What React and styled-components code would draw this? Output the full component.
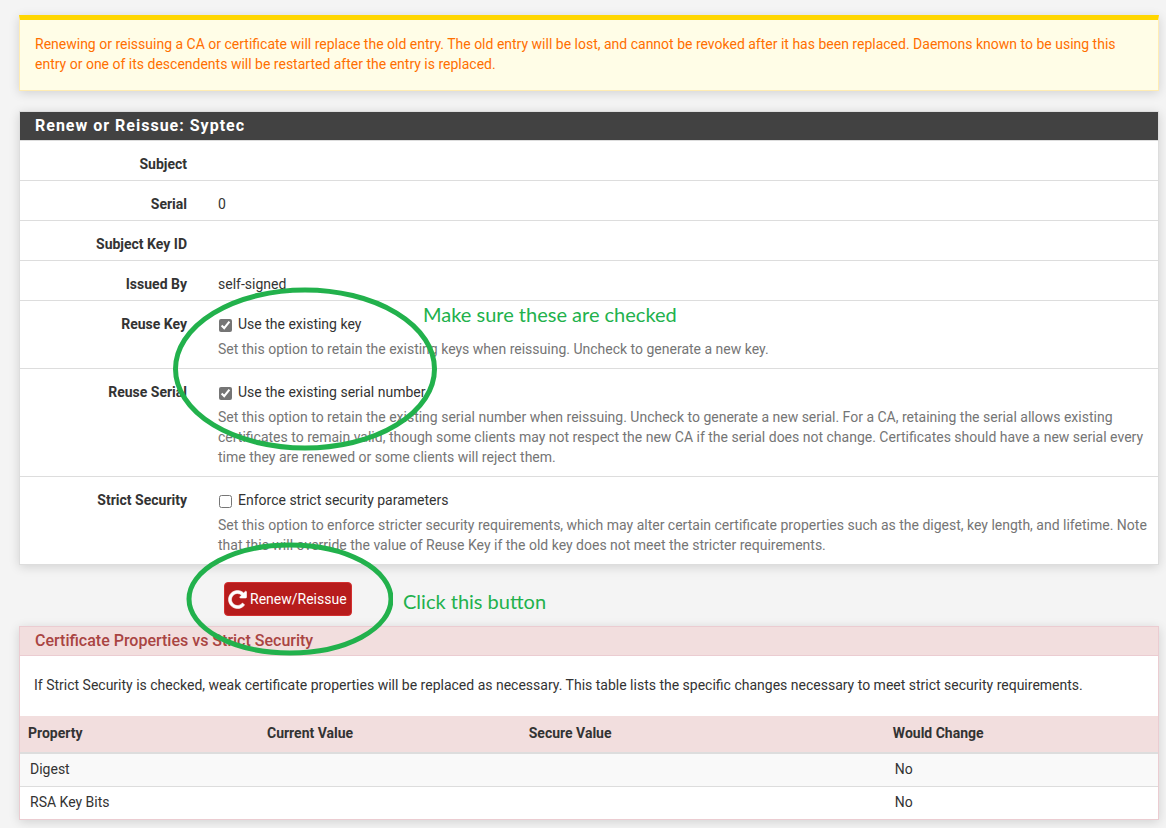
import {useState} from "react";
import styled, {createGlobalStyle, css} from "styled-components";

const GlobalStyle = createGlobalStyle`
  * {
    box-sizing: border-box;
  }
  body {
    margin: 0;
    background: #f4f4f4;
    color: #333;
    font-family: Roboto, "Liberation Sans", sans-serif;
    font-size: 14px;
    line-height: 20px;
  }
`

const details = [
    {label: "Subject", value: ""},
    {label: "Serial", value: "0"},
    {label: "Subject Key ID", value: ""},
    {label: "Issued By", value: "self-signed"},
]

const options = [
    {
        id: "reusekey",
        label: "Reuse Key",
        text: "Use the existing key",
        help: "Set this option to retain the existing keys when reissuing. Uncheck to generate a new key.",
    },
    {
        id: "reuseserial",
        label: "Reuse Serial",
        text: "Use the existing serial number",
        help: "Set this option to retain the existing serial number when reissuing. Uncheck to generate a new serial. For a CA, retaining the serial allows existing certificates to remain valid, though some clients may not respect the new CA if the serial does not change. Certificates should have a new serial every time they are renewed or some clients will reject them.",
    },
    {
        id: "strictsecurity",
        label: "Strict Security",
        text: "Enforce strict security parameters",
        help: "Set this option to enforce stricter security requirements, which may alter certain certificate properties such as the digest, key length, and lifetime. Note that this will override the value of Reuse Key if the old key does not meet the stricter requirements.",
    },
]

const properties = [
    {name: "Digest", current: "", secure: "", change: "No"},
    {name: "RSA Key Bits", current: "", secure: "", change: "No"},
]

const RepeatIcon = () => (
    <svg width="21" height="21" viewBox="0 0 1792 1792" fill="currentColor" stroke="currentColor" strokeWidth="50" aria-hidden="true">
        <path d="M1664 256v448q0 26-19 45t-45 19h-448q-42 0-59-40-17-39 14-69l138-138q-148-137-349-137-104 0-198.500 40.500t-163.500 109.500-109.500 163.500-40.500 198.500 40.500 198.500 109.500 163.500 163.500 109.500 198.500 40.500q119 0 225-52t179-147q7-10 23-12 15 0 25 9l137 138q9 8 9.500 20.500t-7.500 22.500q-109 132-264 204.500t-327 72.500q-156 0-298-61t-245-164-164-245-61-298 61-298 164-245 245-164 298-61q147 0 284.500 55.500t244.500 156.500l130-129q29-31 70-14 39 17 39 59z" />
    </svg>
)

export default function App() {
    const [checked, setChecked] = useState({reusekey: true, reuseserial: true, strictsecurity: false})
    const toggle = (id) => setChecked({...checked, [id]: !checked[id]})

    return (
        <Page>
            <GlobalStyle />
            <Alert role="alert">
                Renewing or reissuing a CA or certificate will replace the old entry. The old entry will be lost, and cannot be revoked after it has been replaced. Daemons known to be using this entry or one of its descendents will be restarted after the entry is replaced.
            </Alert>
            <form onSubmit={(e) => e.preventDefault()}>
                <Panel>
                    <PanelTitle>Renew or Reissue: Syptec</PanelTitle>
                    {details.map(({label, value}) => (
                        <Row key={label}>
                            <Label as="span">{label}</Label>
                            <div>{value}</div>
                        </Row>
                    ))}
                    {options.map(({id, label, text, help}) => (
                        <Row key={id} $hasHelp>
                            <Label htmlFor={id}>{label}</Label>
                            <div>
                                <Check>
                                    <input type="checkbox" id={id} checked={checked[id]} onChange={() => toggle(id)} />
                                    {text}
                                </Check>
                                <Help>{help}</Help>
                            </div>
                            {id === "reusekey" && (
                                <Annotation $left={153} $top={-15} $width={264} $height={166}>
                                    <ellipse cx="132" cy="83" rx="129.5" ry="79" />
                                </Annotation>
                            )}
                            {id === "reusekey" && <Note $left={403} $top={0}>Make sure these are checked</Note>}
                        </Row>
                    ))}
                </Panel>
                <Actions>
                    <Submit type="submit"><RepeatIcon />Renew/Reissue</Submit>
                    <Annotation $left={167} $top={-24} $width={207} $height={116}>
                        <ellipse cx="104" cy="58" rx="101" ry="54" />
                    </Annotation>
                    <Note $left={384} $top={23}>Click this button</Note>
                </Actions>
            </form>
            <Panel $danger>
                <PanelTitle $danger>Certificate Properties vs Strict Security</PanelTitle>
                <Intro>If Strict Security is checked, weak certificate properties will be replaced as necessary. This table lists the specific changes necessary to meet strict security requirements.</Intro>
                <Table>
                    <colgroup>
                        <Col $width="21%" />
                        <Col $width="23%" />
                        <Col $width="32%" />
                        <Col />
                    </colgroup>
                    <thead>
                        <tr>
                            <th>Property</th>
                            <th>Current Value</th>
                            <th>Secure Value</th>
                            <th>Would Change</th>
                        </tr>
                    </thead>
                    <tbody>
                        {properties.map(({name, current, secure, change}) => (
                            <tr key={name}>
                                <td>{name}</td>
                                <td>{current}</td>
                                <td>{secure}</td>
                                <td>{change}</td>
                            </tr>
                        ))}
                    </tbody>
                </Table>
            </Panel>
        </Page>
    )
}

const Page = styled.main`
  padding: 15px 7px 8px 19px;
`

const Alert = styled.div`
  margin-bottom: 20px;
  padding: 14px 15px 16px;
  background: #fffde7;
  border: 1px solid #ffecb3;
  border-top: 5px solid #ffd600;
  color: #ff6f00;
  box-shadow: 0 2px 10px rgba(0, 0, 0, 0.14);
`

const Panel = styled.section`
  background: #fff;
  border: 1px solid ${({$danger}) => $danger ? "#ebccd1" : "#ddd"};
  box-shadow: 0 2px 10px rgba(0, 0, 0, 0.14);
`

const PanelTitle = styled.h2`
  margin: 0;
  padding: 4px 15px;
  background: #424242;
  border-bottom: 1px solid #ddd;
  color: #fff;
  font-size: 16px;
  font-weight: 700;
  line-height: 20px;
  letter-spacing: 1px;
  ${({$danger}) => $danger && css`
    background: #f2dede;
    border-color: #ebccd1;
    color: #a94442;
    font-weight: 500;
    letter-spacing: 0;
  `}
`

const Row = styled.div`
  position: relative;
  display: grid;
  grid-template-columns: 167px 1fr;
  column-gap: 31px;
  min-height: 40px;
  padding: ${({$hasHelp}) => $hasHelp ? "13px 10px 9px 0" : "13px 10px 6px 0"};
  border-bottom: 1px solid #ddd;
  &:last-child {
    border-bottom: none;
  }
`

const Label = styled.label`
  font-weight: 700;
  text-align: right;
`

const Check = styled.label`
  display: flex;
  align-items: center;
  gap: 6px;
  input {
    width: 13px;
    height: 13px;
    margin: 2px 0 0 1px;
    accent-color: #757575;
  }
`

const Help = styled.p`
  margin: 5px 0 0;
  color: #757575;
`

const Actions = styled.div`
  position: relative;
  padding: 17px 0 10px 205px;
`

const Submit = styled.button`
  display: flex;
  align-items: center;
  gap: 2px;
  height: 34px;
  padding: 0 4px 0 2px;
  background: #b71c1c;
  border: 1px solid #d32f2f;
  border-radius: 4px;
  color: #fff;
  font: inherit;
  cursor: pointer;
`

// hand-drawn style rings laid over the form
const Annotation = styled.svg`
  position: absolute;
  z-index: 1;
  left: ${({$left}) => $left}px;
  top: ${({$top}) => $top}px;
  width: ${({$width}) => $width}px;
  height: ${({$height}) => $height}px;
  pointer-events: none;
  fill: none;
  stroke: #22b14c;
  stroke-width: 5px;
`

const Note = styled.span`
  position: absolute;
  z-index: 1;
  left: ${({$left}) => $left}px;
  top: ${({$top}) => $top}px;
  color: #22b14c;
  font-family: Lato, sans-serif;
  font-size: 20px;
  line-height: 26px;
  white-space: nowrap;
`

const Intro = styled.p`
  margin: 0;
  padding: 19px 14px 21px;
`

const Table = styled.table`
  width: 100%;
  border-collapse: separate;
  border-spacing: 0;
  table-layout: fixed;
  text-align: left;
  th {
    height: 38px;
    padding: 0 8px 2px;
    background: #f2dede;
    border-bottom: 2px solid #ddd;
  }
  td {
    height: 33px;
    padding: 0 10px 2px;
    border-bottom: 1px solid #ddd;
  }
  tbody tr:nth-child(odd) {
    background: #f9f9f9;
  }
  tbody tr:last-child td {
    height: 32px;
    border-bottom: none;
  }
`

const Col = styled.col`
  width: ${({$width}) => $width || "auto"};
`
